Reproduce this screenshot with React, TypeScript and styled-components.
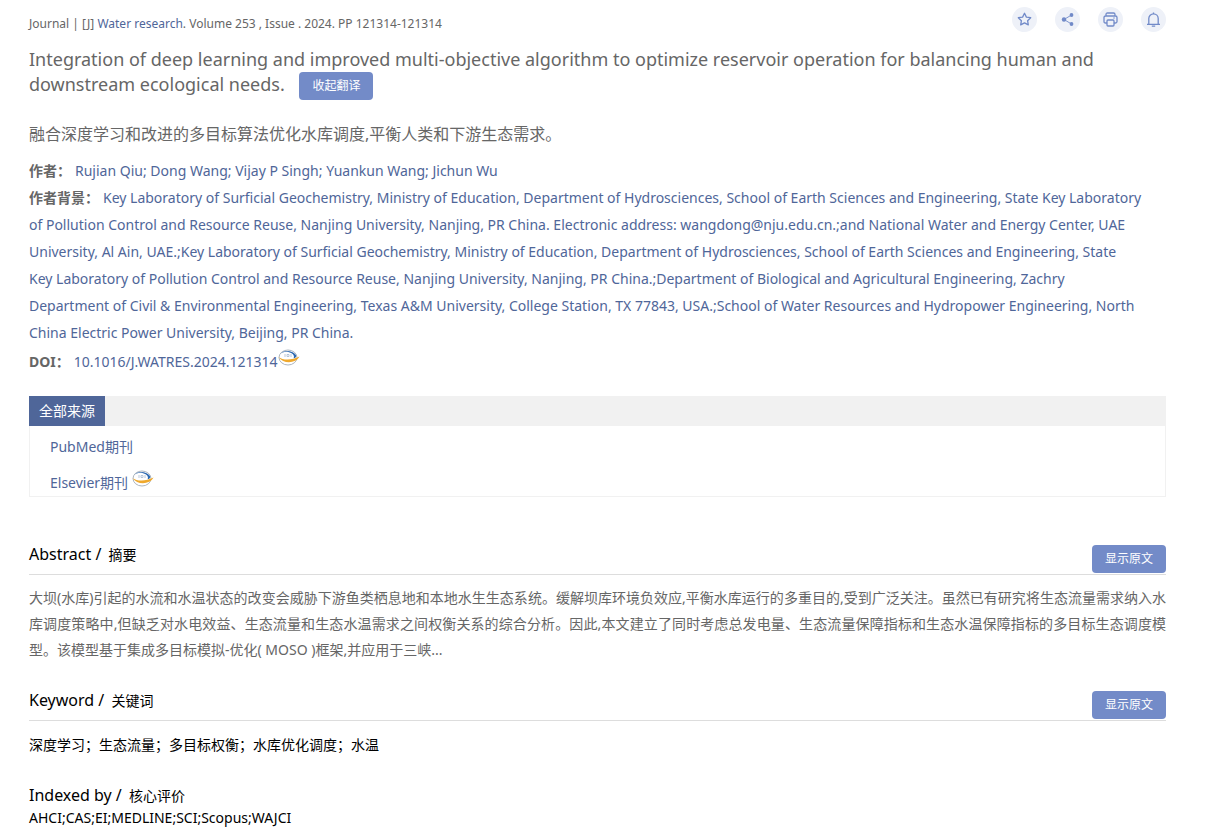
import React from "react";
import styled, { createGlobalStyle } from "styled-components";

const GlobalStyle = createGlobalStyle`
  * { box-sizing: border-box; }
  body {
    margin: 0;
    background: #fff;
    color: #666;
    font: 14px/27px "Noto Sans", "Noto Sans CJK SC", sans-serif;
  }
  h1, h2, p, ul { margin: 0; padding: 0; font-weight: 400; }
  a { color: #4f6699; text-decoration: none; }
`;

const Page = styled.main`
  padding: 7px 48px 8px 29px;
`;

const TopBar = styled.header`
  display: flex;
  justify-content: space-between;
  align-items: flex-start;
`;

const Citation = styled.p`
  padding-top: 5px;
  font-size: 12px;
  line-height: 24px;
`;

const Tools = styled.div`
  display: flex;
  gap: 18px;
`;

const ToolButton = styled.button`
  width: 25px;
  height: 25px;
  padding: 0;
  border: 0;
  border-radius: 50%;
  background: #eef1f8;
  color: #718ac8;
  display: grid;
  place-items: center;
`;

const Title = styled.h1`
  margin-top: 11px;
  font-size: 18px;
  line-height: 25px;
`;

const Action = styled.button`
  height: 28px;
  padding: 0 13px;
  border: 0;
  border-radius: 4px;
  background: #738bc8;
  color: #fff;
  font: 12px/28px "Noto Sans", "Noto Sans CJK SC", sans-serif;
  vertical-align: middle;

  ${Title} & { margin-left: 10px; }
`;

const Translation = styled.p`
  margin: 21px 0 9px;
  font-size: 16px;
`;

const Detail = styled.p<{ $tall?: boolean }>`
  line-height: ${(p) => (p.$tall ? 32 : 27)}px;
  color: #4f6699;
`;

const Label = styled.b`
  margin-right: 4px;
  color: #666;
`;

const Sources = styled.section`
  margin-top: 18px;
  border: 1px solid #f1f1f1;
  border-top: 0;
`;

const TabBar = styled.div`
  margin: 0 -1px;
  background: #f1f1f1;
`;

const Tab = styled.button`
  display: block;
  height: 30px;
  padding: 0 10px;
  border: 0;
  background: #4f6699;
  color: #fff;
  font: 14px/30px "Noto Sans", "Noto Sans CJK SC", sans-serif;
`;

const SourceList = styled.ul`
  list-style: none;
  padding: 3px 20px 0;
  line-height: 36px;
  height: 70px;
`;

const Section = styled.section`
  margin-top: 27px;

  ${Sources} + & { margin-top: 47px; }
`;

const SectionHead = styled.div`
  display: flex;
  justify-content: space-between;
  align-items: flex-end;
  min-height: 31px;
  padding-bottom: 1px;
  border-bottom: 1px solid #ddd;
`;

const Heading = styled.h2`
  align-self: flex-start;
  color: #000;
  font-size: 16px;
  line-height: 20px;

  small {
    margin-left: 3px;
    font-size: 14px;
  }
`;

const Abstract = styled.p`
  margin-top: 10px;
  line-height: 26px;
  text-align: justify;
`;

const Keywords = styled.p`
  margin-top: 11px;
  color: #000;
  line-height: 26px;
`;

const Indexes = styled.p`
  color: #000;
  line-height: 24px;
`;

const Logo = styled.svg`
  vertical-align: 0;
`;

const ReaderLogo = () => (
  <Logo width="22" height="18" viewBox="0 0 22 18" aria-hidden="true">
    <ellipse cx="10" cy="8.500" rx="9" ry="7.500" fill="#fff" stroke="#a3adb8" strokeWidth="0.9" />
    <path d="M2 5.500C5 .8 14 .8 18 6C18.800 8 17.500 9.200 15.500 9.200C17 7 15 4.200 11 3.200C7 2.200 4 3.500 2 5.500Z" fill="#2e69b0" />
    <path d="M.5 8C5 11.500 14 11.500 21.500 7.500C18 14.500 5.500 15.500 .5 8Z" fill="#efa92d" />
    <path d="M7 5v3M9 5.500h2v2H9zM13 5v3" fill="none" stroke="#a9bad0" strokeWidth="0.8" />
  </Logo>
);

const Glyph = ({ children }: { children: React.ReactNode }) => (
  <svg width="15" height="15" viewBox="0 0 15 15" fill="none" stroke="currentColor" strokeWidth="1.3" strokeLinejoin="round" aria-hidden="true">
    {children}
  </svg>
);

export default function App() {
  return (
    <>
      <GlobalStyle />
      <Page>
        <TopBar>
          <Citation>
            Journal | [J] <a href="#journal">Water research</a>. Volume 253 , Issue . 2024. PP 121314-121314
          </Citation>
          <Tools>
            <ToolButton aria-label="收藏">
              <Glyph><path d="M7.500 1.300l1.900 3.800 4.300.6-3.100 3 .7 4.200-3.800-2-3.800 2 .7-4.200-3.100-3 4.300-.6z" /></Glyph>
            </ToolButton>
            <ToolButton aria-label="分享">
              <Glyph>
                <path d="M11.500 3L4 7.500l7.500 4.500" strokeWidth="0.9" />
                <g fill="currentColor" stroke="none">
                  <circle cx="11.500" cy="3" r="1.900" /><circle cx="4" cy="7.500" r="2.200" /><circle cx="11.500" cy="12" r="1.900" />
                </g>
              </Glyph>
            </ToolButton>
            <ToolButton aria-label="打印">
              <Glyph>
                <path d="M3 4V2.500q0-1.500 1.500-1.500h6q1.500 0 1.500 1.500V4M4 11H2.500Q1 11 1 9.500v-4Q1 4 2.500 4h10Q14 4 14 5.500v4q0 1.500-1.500 1.500H11M4 9q0-1 1-1h5q1 0 1 1v4q0 1-1 1H5q-1 0-1-1zM10.500 6h1" />
              </Glyph>
            </ToolButton>
            <ToolButton aria-label="提醒">
              <Glyph><path d="M1 12.300h13M2.800 12V6.500a4.700 4.700 0 0 1 9.400 0V12M7.500 .5v1.300M5.800 14.200h3.400" /></Glyph>
            </ToolButton>
          </Tools>
        </TopBar>

        <Title>
          Integration of deep learning and improved multi-objective algorithm to optimize reservoir operation for balancing human and downstream ecological needs. <Action>收起翻译</Action>
        </Title>
        <Translation>融合深度学习和改进的多目标算法优化水库调度,平衡人类和下游生态需求。</Translation>

        <Detail>
          <Label>作者：</Label>Rujian Qiu; Dong Wang; Vijay P Singh; Yuankun Wang; Jichun Wu
        </Detail>
        <Detail>
          <Label>作者背景：</Label>Key Laboratory of Surficial Geochemistry, Ministry of Education, Department of Hydrosciences, School of Earth Sciences and Engineering, State Key Laboratory<br />
          of Pollution Control and Resource Reuse, Nanjing University, Nanjing, PR China. Electronic address: wangdong@nju.edu.cn.;and National Water and Energy Center, UAE<br />
          University, Al Ain, UAE.;Key Laboratory of Surficial Geochemistry, Ministry of Education, Department of Hydrosciences, School of Earth Sciences and Engineering, State<br />
          Key Laboratory of Pollution Control and Resource Reuse, Nanjing University, Nanjing, PR China.;Department of Biological and Agricultural Engineering, Zachry<br />
          Department of Civil &amp; Environmental Engineering, Texas A&amp;M University, College Station, TX 77843, USA.;School of Water Resources and Hydropower Engineering, North<br />
          China Electric Power University, Beijing, PR China.
        </Detail>
        <Detail $tall>
          <Label>DOI：</Label><a href="#doi">10.1016/J.WATRES.2024.121314<ReaderLogo /></a>
        </Detail>

        <Sources>
          <TabBar><Tab>全部来源</Tab></TabBar>
          <SourceList>
            <li><a href="#pubmed">PubMed期刊</a></li>
            <li><a href="#elsevier">Elsevier期刊 <ReaderLogo /></a></li>
          </SourceList>
        </Sources>

        <Section>
          <SectionHead>
            <Heading>Abstract / <small>摘要</small></Heading>
            <Action>显示原文</Action>
          </SectionHead>
          <Abstract>
            大坝(水库)引起的水流和水温状态的改变会威胁下游鱼类栖息地和本地水生生态系统。缓解坝库环境负效应,平衡水库运行的多重目的,受到广泛关注。虽然已有研究将生态流量需求纳入水库调度策略中,但缺乏对水电效益、生态流量和生态水温需求之间权衡关系的综合分析。因此,本文建立了同时考虑总发电量、生态流量保障指标和生态水温保障指标的多目标生态调度模型。该模型基于集成多目标模拟-优化( MOSO )框架,并应用于三峡...
          </Abstract>
        </Section>

        <Section>
          <SectionHead>
            <Heading>Keyword / <small>关键词</small></Heading>
            <Action>显示原文</Action>
          </SectionHead>
          <Keywords>深度学习；生态流量；多目标权衡；水库优化调度；水温</Keywords>
        </Section>

        <Section>
          <Heading>Indexed by / <small>核心评价</small></Heading>
          <Indexes>AHCI;CAS;EI;MEDLINE;SCI;Scopus;WAJCI</Indexes>
        </Section>
      </Page>
    </>
  );
}
